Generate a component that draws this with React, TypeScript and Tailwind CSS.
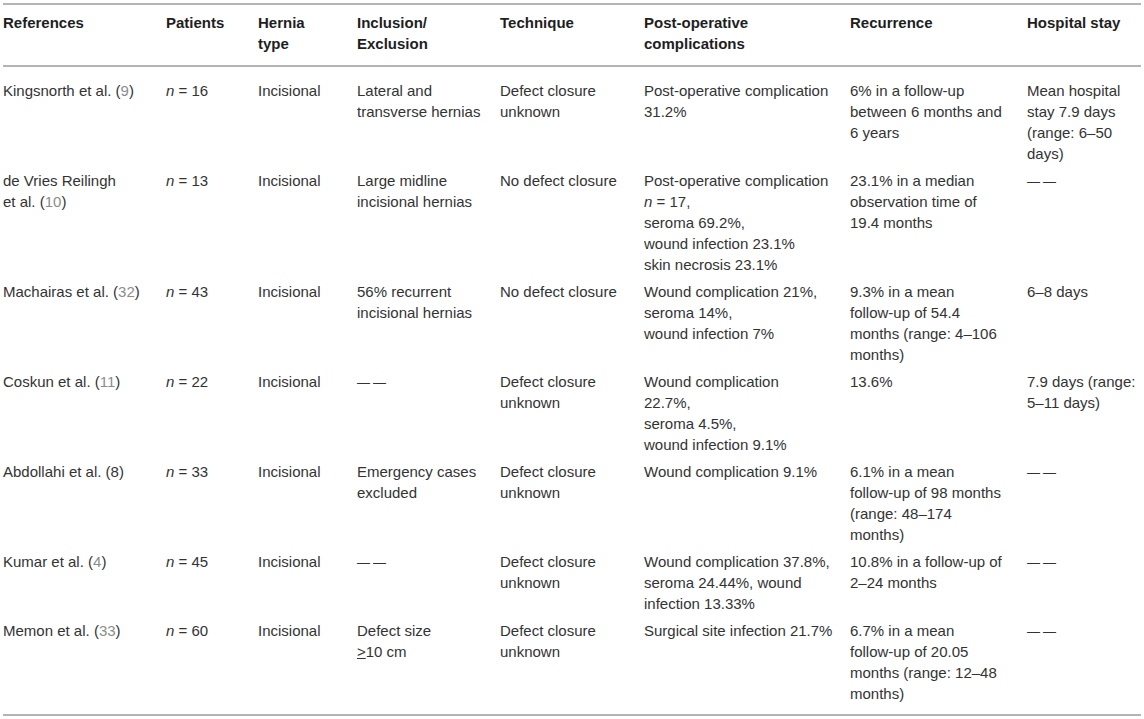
import type { ReactNode } from "react";

const N = ({ v }: { v: string }) => (
  <>
    <i>n</i> = {v}
  </>
);

const Ref = ({ name, num, plain }: { name: string; num: string; plain?: boolean }) => (
  <>
    {name} (<span className={plain ? "" : "text-[#8c8c8c]"}>{num}</span>)
  </>
);

const DASH = <span className="text-[13px] tracking-[3px]">——</span>;

const HEADERS: ReactNode[][] = [
  ["References"],
  ["Patients"],
  ["Hernia", "type"],
  ["Inclusion/", "Exclusion"],
  ["Technique"],
  ["Post-operative", "complications"],
  ["Recurrence"],
  ["Hospital stay"],
];

const COL_WIDTHS = ["w-[163px]", "w-[92px]", "w-[99px]", "w-[143px]", "w-[144px]", "w-[206px]", "w-[177px]", "w-[114px]"];

const ROWS: ReactNode[][][] = [
  [
    [<Ref name="Kingsnorth et al." num="9" />],
    [<N v="16" />],
    ["Incisional"],
    ["Lateral and", "transverse hernias"],
    ["Defect closure", "unknown"],
    ["Post-operative complication", "31.2%"],
    ["6% in a follow-up", "between 6 months and", "6 years"],
    ["Mean hospital", "stay 7.9 days", "(range: 6–50", "days)"],
  ],
  [
    ["de Vries Reilingh", <Ref name="et al." num="10" />],
    [<N v="13" />],
    ["Incisional"],
    ["Large midline", "incisional hernias"],
    ["No defect closure"],
    ["Post-operative complication", <><N v="17" />,</>, "seroma 69.2%,", "wound infection 23.1%", "skin necrosis 23.1%"],
    ["23.1% in a median", "observation time of", "19.4 months"],
    [DASH],
  ],
  [
    [<Ref name="Machairas et al." num="32" />],
    [<N v="43" />],
    ["Incisional"],
    ["56% recurrent", "incisional hernias"],
    ["No defect closure"],
    ["Wound complication 21%,", "seroma 14%,", "wound infection 7%"],
    ["9.3% in a mean", "follow-up of 54.4", "months (range: 4–106", "months)"],
    ["6–8 days"],
  ],
  [
    [<Ref name="Coskun et al." num="11" />],
    [<N v="22" />],
    ["Incisional"],
    [DASH],
    ["Defect closure", "unknown"],
    ["Wound complication", "22.7%,", "seroma 4.5%,", "wound infection 9.1%"],
    ["13.6%"],
    ["7.9 days (range:", "5–11 days)"],
  ],
  [
    [<Ref name="Abdollahi et al." num="8" plain />],
    [<N v="33" />],
    ["Incisional"],
    ["Emergency cases", "excluded"],
    ["Defect closure", "unknown"],
    ["Wound complication 9.1%"],
    ["6.1% in a mean", "follow-up of 98 months", "(range: 48–174", "months)"],
    [DASH],
  ],
  [
    [<Ref name="Kumar et al." num="4" />],
    [<N v="45" />],
    ["Incisional"],
    [DASH],
    ["Defect closure", "unknown"],
    ["Wound complication 37.8%,", "seroma 24.44%, wound", "infection 13.33%"],
    ["10.8% in a follow-up of", "2–24 months"],
    [DASH],
  ],
  [
    [<Ref name="Memon et al." num="33" />],
    [<N v="60" />],
    ["Incisional"],
    ["Defect size", <><span className="underline">&gt;</span>10 cm</>],
    ["Defect closure", "unknown"],
    ["Surgical site infection 21.7%"],
    ["6.7% in a mean", "follow-up of 20.05", "months (range: 12–48", "months)"],
    [DASH],
  ],
];

function Lines({ lines }: { lines: ReactNode[] }) {
  return (
    <>
      {lines.map((l, i) => (
        <div key={i} className="whitespace-nowrap">
          {l}
        </div>
      ))}
    </>
  );
}

export default function App() {
  return (
    <div className="w-[1144px] h-[719px] bg-white px-[3px] pt-[3px] font-['Liberation_Sans',Arial,sans-serif] text-[15px] leading-[21px] text-[#333]">
      <table className="w-full table-fixed border-collapse">
        <colgroup>
          {COL_WIDTHS.map((w, i) => (
            <col key={i} className={w} />
          ))}
        </colgroup>
        <thead>
          <tr className="border-t-2 border-b-2 border-[#b4b4b4]">
            {HEADERS.map((h, i) => (
              <th key={i} className="p-0 pt-[7px] pb-[11px] text-left align-top font-bold text-[#1e1e1e]">
                <Lines lines={h} />
              </th>
            ))}
          </tr>
        </thead>
        <tbody>
          {ROWS.map((row, r) => (
            <tr key={r} className={r === ROWS.length - 1 ? "border-b-2 border-[#b4b4b4]" : ""}>
              {row.map((cell, c) => (
                <td
                  key={c}
                  className={`p-0 align-top ${r === 0 ? "pt-[13px]" : "pt-[3px]"} ${
                    r === ROWS.length - 1 ? "pb-[10px]" : "pb-[3px]"
                  }`}
                >
                  <Lines lines={cell} />
                </td>
              ))}
            </tr>
          ))}
        </tbody>
      </table>
    </div>
  );
}
